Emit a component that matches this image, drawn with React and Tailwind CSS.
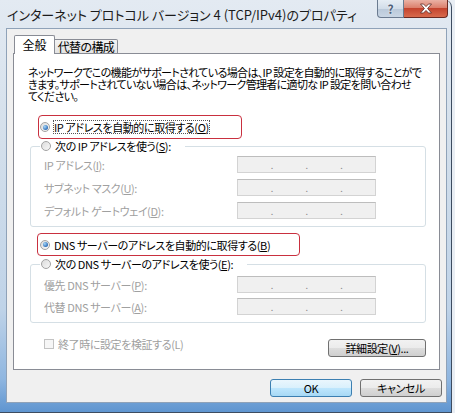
import React from "react";

const U = ({ children }) => <span className="underline underline-offset-[1px]">{children}</span>;

function Radio({ checked }) {
  return (
    <span className="flex h-[10px] w-[10px] shrink-0 items-center justify-center rounded-full border border-[#a3a3a3] bg-[linear-gradient(135deg,#dcdcdc,#f8f8f8)]">
      {checked && (
        <span className="h-[5px] w-[5px] rounded-full bg-[radial-gradient(circle_at_35%_35%,#a6d8fa,#1f5fae_80%)]" />
      )}
    </span>
  );
}

function IPField() {
  return (
    <div className="flex h-[17px] w-[139px] shrink-0 items-end border border-[#d3d3d3] border-t-[#bdbdbd] bg-[#f0f0f0] pb-[2px] text-[9px] leading-[9px] text-[#8a8a8a]">
      <span className="flex-1" />
      <span>.</span>
      <span className="flex-1" />
      <span>.</span>
      <span className="flex-1" />
      <span>.</span>
      <span className="flex-1" />
    </div>
  );
}

function Row({ children }) {
  return (
    <div className="flex h-[17px] items-center">
      <span className="w-[206px] shrink-0 whitespace-nowrap pl-[13px] text-[#a0a0a0]">{children}</span>
      <IPField />
    </div>
  );
}

function Button({ children, primary, className = "" }) {
  return (
    <div
      className={
        "flex h-[18px] shrink-0 items-center justify-center rounded-[3px] border text-[11px] leading-none " +
        (primary
          ? "border-[#3c7fb1] bg-[linear-gradient(180deg,#eaf6fd_0%,#d9f0fc_50%,#bee6fd_51%,#a7d9f5_100%)] "
          : "border-[#707070] bg-[linear-gradient(180deg,#f2f2f2_0%,#ebebeb_50%,#dddddd_51%,#cfcfcf_100%)] ") +
        className
      }
    >
      {children}
    </div>
  );
}

export default function App() {
  return (
    <div className="h-[413px] w-[455px] overflow-hidden bg-[#e9eef4] font-['Noto_Sans_CJK_JP',sans-serif] text-black [font-feature-settings:'palt']">
      <div className="flex h-[413px] w-[452px] flex-col rounded-tr-[7px] border-r border-b border-[#3d4c60] bg-[linear-gradient(180deg,#e3eaf2_0%,#d3dfeb_35%,#bfd3e8_75%,#8fb6e0_92%,#5f95d0_100%)]">
        {/* title bar */}
        <div className="flex h-[28px] shrink-0 items-start">
          <div className="whitespace-nowrap pl-[7px] pt-[6px] text-[13px] leading-[18px] text-[#1b1b1b]">
            インターネット プロトコル バージョン 4 (TCP/IPv4)のプロパティ
          </div>
          <div className="ml-auto mr-[3px] flex">
            <div className="flex h-[18px] w-[27px] items-center justify-center rounded-bl-[4px] border border-t-0 border-[#6b7b90] bg-[linear-gradient(180deg,#e6edf4_0%,#d2dde9_50%,#b9c8d9_51%,#c9d6e4_100%)] text-[12px] font-bold leading-none text-[#4e6079] [text-shadow:0_0_2px_#ffffff]">
              ?
            </div>
            <div className="flex h-[18px] w-[44px] items-center justify-center rounded-br-[4px] border border-t-0 border-l-0 border-[#6b2a22] bg-[linear-gradient(180deg,#eab2a5_0%,#dc806d_45%,#c4442f_50%,#d86a4c_100%)]">
              <svg width="14" height="11" viewBox="0 0 14 11">
                <path
                  d="M1.5 1 L4.5 1 L7 3.6 L9.5 1 L12.5 1 L8.6 5.5 L12.5 10 L9.5 10 L7 7.4 L4.5 10 L1.5 10 L5.4 5.5 Z"
                  fill="#ffffff"
                  stroke="#5a2a24"
                  strokeWidth="0.8"
                  strokeLinejoin="round"
                />
              </svg>
            </div>
          </div>
        </div>

        {/* client area */}
        <div className="ml-[6px] flex w-[441px] flex-col border border-[#8fa2b8] bg-[#f0f0f0] text-[11px] leading-[12px] tracking-[-0.4px]">
          <div className="mx-[6px] flex flex-col">
            {/* tabs */}
            <div className="flex h-[24px] items-end pl-[1px]">
              <div className="relative z-10 -mb-px flex h-[19px] w-[41px] shrink-0 items-center justify-center rounded-t-[2px] border border-b-0 border-[#898c95] bg-white pb-[1px] text-[12px] tracking-normal">
                全般
              </div>
              <div className="-mb-px flex h-[15px] w-[63px] shrink-0 items-center justify-center rounded-tr-[2px] border border-l-0 border-[#898c95] bg-[linear-gradient(180deg,#f3f3f3,#e3e3e3)] text-[12px] tracking-[-0.6px]">
                代替の構成
              </div>
            </div>

            {/* panel */}
            <div className="flex h-[317px] flex-col border border-[#898c95] bg-white">
              <div className="ml-[14px] mt-[12px] whitespace-nowrap tracking-[-0.65px]">
                <div>ネットワークでこの機能がサポートされている場合は、IP 設定を自動的に取得することがで</div>
                <div>きます。サポートされていない場合は、ネットワーク管理者に適切な IP 設定を問い合わせ</div>
                <div>てください。</div>
              </div>

              <div className="ml-[24px] mt-[13px] flex h-[24px] w-[204px] items-center gap-[3px] whitespace-nowrap rounded-[4px] border border-[#c9303f] pl-[1px]">
                <Radio checked />
                <span className="border border-dotted border-[#555] leading-[12px]">
                  IP アドレスを自動的に取得する(<U>O</U>)
                </span>
              </div>

              <fieldset className="ml-[16px] w-[396px] rounded-[3px] border border-[#d5dfe5] pb-[7px]">
                <legend className="ml-[9px] pr-[14px] pl-[1px]">
                  <span className="flex h-[14px] items-center gap-[4px] whitespace-nowrap">
                    <Radio />
                    <span>
                      次の IP アドレスを使う(<U>S</U>):
                    </span>
                  </span>
                </legend>
                <div className="flex flex-col gap-[6px] pt-[3px]">
                  <Row>
                    IP アドレス(<U>I</U>):
                  </Row>
                  <Row>
                    サブネット マスク(<U>U</U>):
                  </Row>
                  <Row>
                    デフォルト ゲートウェイ(<U>D</U>):
                  </Row>
                </div>
              </fieldset>

              <div className="ml-[23px] mt-[6px] flex h-[23px] w-[263px] items-center gap-[4px] whitespace-nowrap rounded-[4px] border border-[#c9303f] pl-[2px]">
                <Radio checked />
                <span>
                  DNS サーバーのアドレスを自動的に取得する(<U>B</U>)
                </span>
              </div>

              <fieldset className="ml-[16px] mt-[1px] w-[396px] rounded-[3px] border border-[#d5dfe5] pb-[7px]">
                <legend className="ml-[9px] pr-[14px] pl-[1px]">
                  <span className="flex h-[14px] items-center gap-[4px] whitespace-nowrap">
                    <Radio />
                    <span>
                      次の DNS サーバーのアドレスを使う(<U>E</U>):
                    </span>
                  </span>
                </legend>
                <div className="flex flex-col gap-[5px] pt-[5px]">
                  <Row>
                    優先 DNS サーバー(<U>P</U>):
                  </Row>
                  <Row>
                    代替 DNS サーバー(<U>A</U>):
                  </Row>
                </div>
              </fieldset>

              <div className="mt-[16px] flex items-start">
                <div className="ml-[30px] flex h-[10px] items-center gap-[4px] whitespace-nowrap text-[#a0a0a0]">
                  <span className="h-[10px] w-[10px] border border-[#c3c3c3] bg-[#f6f6f6]" />
                  <span>終了時に設定を検証する(L)</span>
                </div>
                <Button className="ml-auto mr-[13px] w-[98px]">
                  詳細設定(<U>V</U>)...
                </Button>
              </div>
            </div>
          </div>

          {/* bottom buttons */}
          <div className="mb-[5px] mr-[4px] mt-[9px] flex justify-end gap-[8px]">
            <Button primary className="w-[82px]">
              OK
            </Button>
            <Button className="w-[82px]">キャンセル</Button>
          </div>
        </div>
      </div>
    </div>
  );
}
